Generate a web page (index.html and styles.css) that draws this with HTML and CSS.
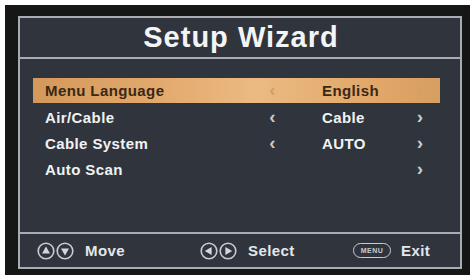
FILE: index.html
```html
<!DOCTYPE html>
<html>
<head>
<meta charset="utf-8">
<link rel="stylesheet" href="styles.css">
</head>
<body>
<div class="frame">
  <div class="panel">
    <div class="title">Setup Wizard</div>
    <div class="content">
      <div class="row active">
        <span class="label">Menu Language</span>
        <span class="arrow">‹</span>
        <span class="value">English</span>
        <span class="arrow">›</span>
      </div>
      <div class="row">
        <span class="label">Air/Cable</span>
        <span class="arrow">‹</span>
        <span class="value">Cable</span>
        <span class="arrow">›</span>
      </div>
      <div class="row">
        <span class="label">Cable System</span>
        <span class="arrow">‹</span>
        <span class="value">AUTO</span>
        <span class="arrow">›</span>
      </div>
      <div class="row">
        <span class="label">Auto Scan</span>
        <span class="arrow"></span>
        <span class="value"></span>
        <span class="arrow">›</span>
      </div>
    </div>
    <div class="footer">
      <div class="group">
        <svg class="btn" viewBox="0 0 18 18"><circle cx="9" cy="9" r="7.8" fill="none" stroke="#c9ccd0" stroke-width="1.6"/><path d="M9 4.6 L13 11.6 L5 11.6 Z" fill="#d4d6da"/></svg>
        <svg class="btn" viewBox="0 0 18 18"><circle cx="9" cy="9" r="7.8" fill="none" stroke="#c9ccd0" stroke-width="1.6"/><path d="M9 13.4 L13 6.4 L5 6.4 Z" fill="#d4d6da"/></svg>
        <span class="ftext">Move</span>
      </div>
      <div class="group">
        <svg class="btn" viewBox="0 0 18 18"><circle cx="9" cy="9" r="7.8" fill="none" stroke="#c9ccd0" stroke-width="1.6"/><path d="M4.8 9 L11.6 5 L11.6 13 Z" fill="#d4d6da"/></svg>
        <svg class="btn" viewBox="0 0 18 18"><circle cx="9" cy="9" r="7.8" fill="none" stroke="#c9ccd0" stroke-width="1.6"/><path d="M13.2 9 L6.4 5 L6.4 13 Z" fill="#d4d6da"/></svg>
        <span class="ftext">Select</span>
      </div>
      <div class="group">
        <span class="menu">MENU</span>
        <span class="ftext">Exit</span>
      </div>
    </div>
  </div>
</div>
</body>
</html>
```
FILE: styles.css
```css
html, body {
  margin: 0;
  padding: 0;
  background: #ffffff;
}
body {
  width: 473px;
  height: 279px;
  font-family: "Liberation Sans", Arial, sans-serif;
}
.frame {
  margin: 5px 3px 4px 5px;
  background: #151616;
  padding: 11px 8px 6px 13px;
  height: 253px;
}
.panel {
  width: 440px;
  height: 249px;
  border: 2px solid #a9adb2;
  background: #30353d;
  display: flex;
  flex-direction: column;
}
.title {
  height: 39px;
  display: flex;
  align-items: center;
  justify-content: center;
  color: #f3f4f6;
  font-weight: bold;
  font-size: 29px;
  letter-spacing: 1px;
  border-bottom: 2px solid #a9adb2;
  padding-left: 2px;
}
.content {
  height: 154px;
  padding: 19px 0 0 13px;
  display: flex;
  flex-direction: column;
}
.row {
  width: 407px;
  height: 26px;
  display: grid;
  grid-template-columns: 232px 15px 132px 16px;
  align-items: center;
  color: #f1f2f4;
  font-weight: bold;
  font-size: 15px;
  letter-spacing: 0.4px;
}
.row.active {
  height: 25px;
  margin-bottom: 1px;
  background: linear-gradient(90deg, #d4985a 0%, #e2a96c 30%, #ebba82 55%, #e0a768 85%, #d69e60 100%);
  color: #3a2815;
}
.label {
  padding-left: 12px;
}
.arrow {
  text-align: center;
  color: #c8cbd0;
  font-size: 19px;
  line-height: 1;
  padding-bottom: 2px;
}
.row.active .arrow {
  color: #d6a060;
}
.value {
  padding-left: 42px;
}
.footer {
  height: 33px;
  border-top: 2px solid #a9adb2;
  display: grid;
  grid-template-columns: 163px 153px auto;
  align-items: center;
  padding-left: 17px;
}
.group {
  display: flex;
  align-items: center;
}
.btn {
  width: 18px;
  height: 18px;
  margin-right: 1px;
}
.ftext {
  color: #e4e6e9;
  font-weight: bold;
  font-size: 15px;
  letter-spacing: 0.4px;
  margin-left: 10px;
}
.menu {
  width: 36px;
  height: 13px;
  border: 1.6px solid #c9ccd0;
  border-radius: 9px;
  color: #c9ccd0;
  font-size: 7px;
  font-weight: bold;
  display: flex;
  align-items: center;
  justify-content: center;
  letter-spacing: 0.5px;
}
```
